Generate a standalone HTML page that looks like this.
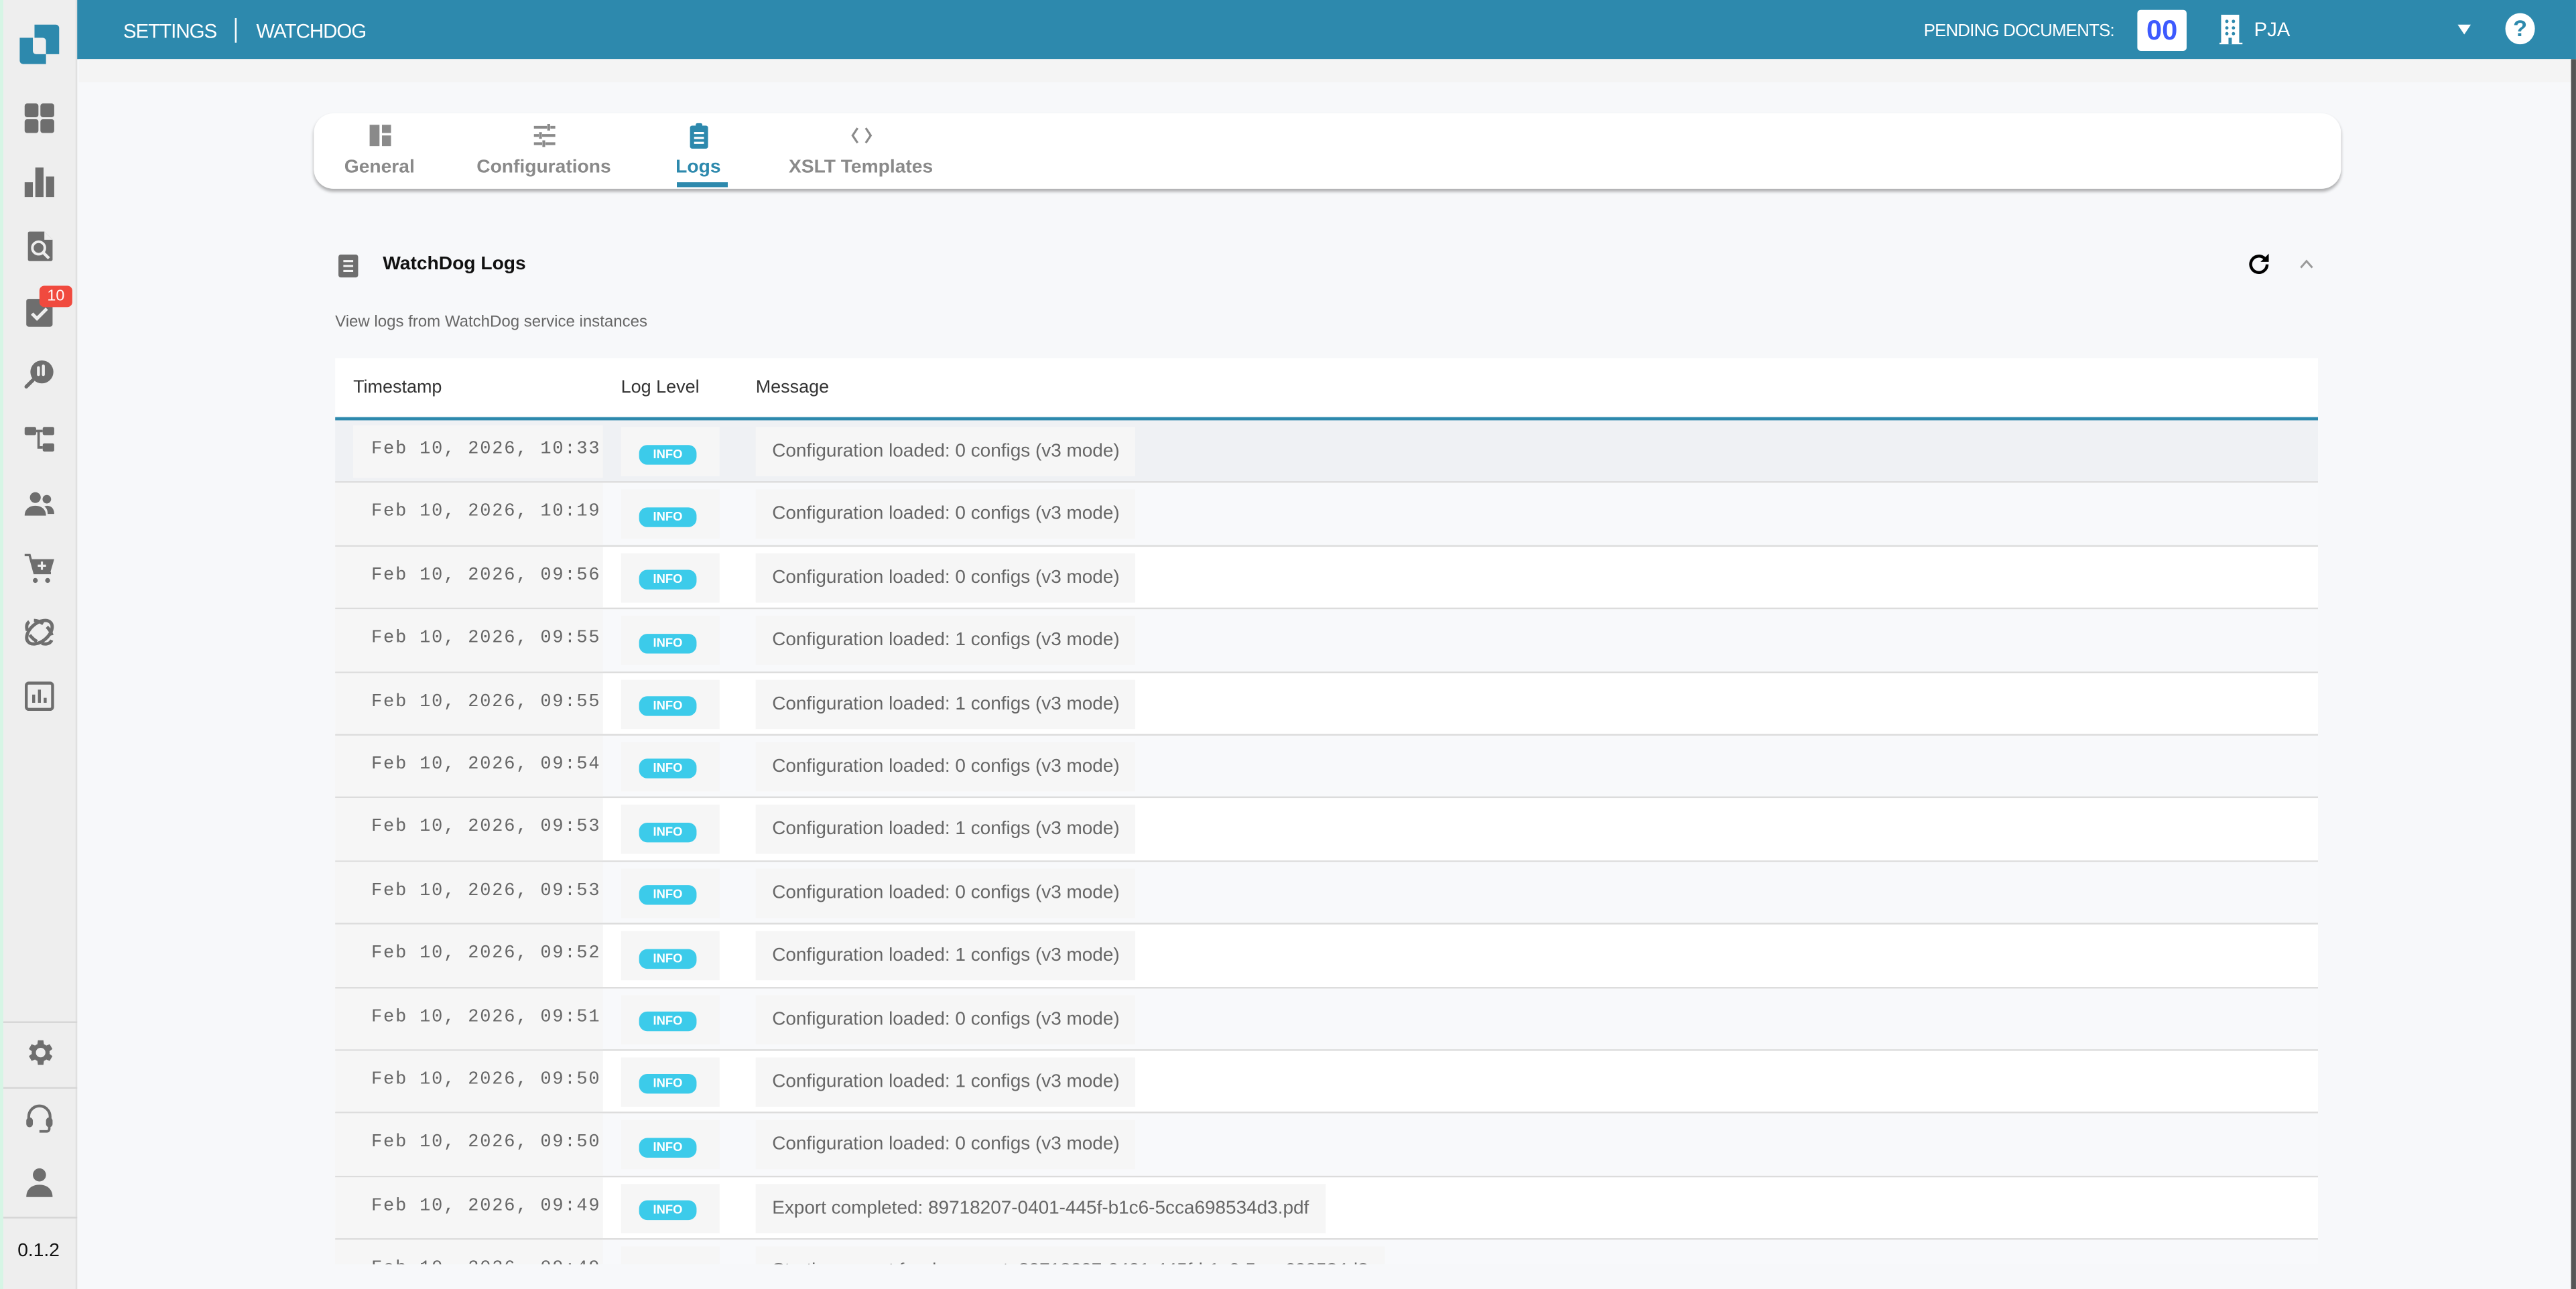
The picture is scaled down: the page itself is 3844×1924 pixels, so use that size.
<!DOCTYPE html>
<html><head><meta charset="utf-8">
<style>
*{box-sizing:border-box;margin:0;padding:0}
html,body{width:3844px;height:1924px;overflow:hidden;background:#f7f8fa}
#s{position:absolute;left:0;top:0;width:1568px;height:785px;transform:scale(2.4515,2.451);transform-origin:0 0;font-family:"Liberation Sans",sans-serif;background:#f7f8fa;overflow:hidden}
.abs{position:absolute}
.side{left:0;top:0;width:47px;height:785px;background:#eeeeee;border-right:1px solid #e0e0e0}
.green{left:0;top:0;width:1.6px;height:785px;background:#d6f5e5;z-index:3}
.ic{position:absolute;left:14px;width:20px;height:20px}
.hdr{left:47px;top:0;width:1521px;height:36px;background:#2d89ad;color:#fff}
.sep{position:absolute;left:0;width:47px;height:1.2px;background:#d6d6d6}
.tabs{left:191px;top:69px;width:1234px;height:46px;background:#fff;border-radius:12px;box-shadow:0 1.5px 2px rgba(0,0,0,.3)}
.tab{position:absolute;top:0;height:46px;text-align:center;font-size:11.5px;font-weight:bold;color:#8a8a8a}
.tab svg{display:block;margin:5px auto 0;width:17px;height:17px}
.tab span{display:block;margin-top:5px}
.tbl{left:204px;top:218px;width:1207px;height:552px;overflow:hidden}
.th{height:38px;background:#fff;border-bottom:2px solid #2d89ad;position:relative;font-size:11px;color:#333}
.th span{position:absolute;top:12px}
.row{position:relative;height:38.4px;border-bottom:1.5px solid #dcdcdc}
.ts{position:absolute;left:0;top:0;width:163px;height:100%;background:#f6f6f6;font-family:"Liberation Mono",monospace;font-size:11px;color:#666;padding-left:22px;line-height:37px;letter-spacing:.75px;white-space:nowrap}
.lv{position:absolute;left:174px;top:4px;width:60px;height:30px;background:#f6f6f6}
.badge{position:absolute;left:11px;top:10.5px;width:35px;height:12px;border-radius:5px;background:#3ccbea;color:#fff;font-size:7.5px;font-weight:bold;text-align:center;line-height:12px}
.msg{position:absolute;left:256px;top:4px;height:30px;background:#f6f6f6;font-size:11.4px;color:#666;padding:0 10px;line-height:30px;white-space:nowrap}
</style></head><body>
<div id="s">
<div class="abs green"></div>
<div class="abs side">
 <svg class="ic" style="top:14px;left:11px;width:26px;height:26px" viewBox="0 0 26 26"><path fill="#2d89ad" d="M10 1h13a2 2 0 0 1 2 2v16h-8v-8a2 2 0 0 0-2-2h-5z"/><path fill="#2d89ad" d="M1 9h8v8a2 2 0 0 0 2 2h6v6H3a2 2 0 0 1-2-2z"/></svg>
 <svg class="ic" style="top:62px" viewBox="0 0 20 20" fill="#6e6e6e"><rect x="1" y="1" width="8.4" height="8.4" rx="1.5"/><rect x="10.6" y="1" width="8.4" height="8.4" rx="1.5"/><rect x="1" y="10.6" width="8.4" height="8.4" rx="1.5"/><rect x="10.6" y="10.6" width="8.4" height="8.4" rx="1.5"/></svg>
 <svg class="ic" style="top:101px" viewBox="0 0 20 20" fill="#6e6e6e"><rect x="1" y="10" width="5" height="9"/><rect x="7.5" y="1" width="5" height="18"/><rect x="14" y="6.5" width="5" height="12.5"/></svg>
 <svg class="ic" style="top:140px" viewBox="0 0 20 20"><path fill="#6e6e6e" d="M4 1h9l5 5v12a1 1 0 0 1-1 1H4a1 1 0 0 1-1-1V2a1 1 0 0 1 1-1z"/><path fill="#eee" d="M13 1v5h5z"/><circle cx="9.5" cy="11" r="3.8" fill="none" stroke="#eee" stroke-width="1.6"/><path d="M12.3 13.8l3.5 3.5" stroke="#eee" stroke-width="1.8"/></svg>
 <svg class="ic" style="top:180px" viewBox="0 0 20 20"><rect x="2" y="2" width="16" height="17" rx="1.5" fill="#6e6e6e"/><path d="M5.5 11l3 3 6-6" stroke="#eee" stroke-width="2" fill="none"/></svg>
 <div class="abs" style="left:24px;top:174px;width:20px;height:13px;background:#f04a3e;border-radius:3px;color:#fff;font-size:9.5px;text-align:center;line-height:13px">10</div>
 <svg class="ic" style="top:218px" viewBox="0 0 20 20"><circle cx="11.5" cy="8.5" r="7" fill="#6e6e6e"/><rect x="8.5" y="5" width="1.8" height="6" rx=".9" fill="#eee"/><rect x="11.5" y="4" width="1.8" height="7" rx=".9" fill="#eee"/><path d="M6 13.5L2 17.5" stroke="#6e6e6e" stroke-width="2.2" stroke-linecap="round"/></svg>
 <svg class="ic" style="top:258px" viewBox="0 0 20 20" fill="#6e6e6e"><rect x="1" y="2" width="7" height="5" rx="1"/><rect x="12" y="2" width="7" height="5" rx="1"/><rect x="12" y="12" width="7" height="5" rx="1"/><path d="M8 4.5h4M9.5 4.5v10h2.5" stroke="#6e6e6e" stroke-width="1.5" fill="none"/></svg>
 <svg class="ic" style="top:297px" viewBox="0 0 20 20" fill="#6e6e6e"><circle cx="7.5" cy="6" r="3.3"/><path d="M1 17c0-4 3-6 6.5-6s6.5 2 6.5 6z"/><circle cx="14.5" cy="7" r="2.6"/><path d="M14.5 11c3 0 4.5 2 4.5 5h-4c0-2-.5-3.5-2-4.6z"/></svg>
 <svg class="ic" style="top:336px" viewBox="0 0 20 20" fill="#6e6e6e"><path d="M4 4.5h15l-2.5 8.5H6.5z"/><path d="M1 2h3l3 11h10" stroke="#6e6e6e" stroke-width="1.4" fill="none"/><circle cx="7.5" cy="17.5" r="1.5"/><circle cx="15" cy="17.5" r="1.5"/><path d="M11.5 6v5M9 8.5h5" stroke="#eee" stroke-width="1.3"/></svg>
 <svg class="ic" style="top:375px" viewBox="0 0 20 20" fill="none" stroke="#6e6e6e" stroke-width="2"><ellipse cx="10" cy="10" rx="9" ry="5.5" transform="rotate(-40 10 10)"/><ellipse cx="10" cy="10" rx="9" ry="5.5" transform="rotate(40 10 10)" stroke-dasharray="6 3"/></svg>
 <svg class="ic" style="top:414px" viewBox="0 0 20 20"><rect x="2" y="2" width="16" height="16" rx="1.5" fill="none" stroke="#6e6e6e" stroke-width="1.8"/><path d="M6.5 14V9M10 14V6M13.5 14v-3" stroke="#6e6e6e" stroke-width="1.8"/></svg>
 <div class="sep" style="top:622px"></div>
 <svg class="ic" style="top:631px" viewBox="0 0 24 24"><path fill="#6e6e6e" d="M19.4 13a7.5 7.5 0 0 0 0-2l2.1-1.6-2-3.5-2.5 1a7 7 0 0 0-1.7-1L14.9 3h-4l-.4 2.9a7 7 0 0 0-1.7 1l-2.5-1-2 3.5L6.4 11a7.5 7.5 0 0 0 0 2l-2.1 1.6 2 3.5 2.5-1a7 7 0 0 0 1.7 1l.4 2.9h4l.4-2.9a7 7 0 0 0 1.7-1l2.5 1 2-3.5zM12.9 15.5a3.5 3.5 0 1 1 0-7 3.5 3.5 0 0 1 0 7z"/></svg>
 <div class="sep" style="top:662px"></div>
 <svg class="ic" style="top:671px" viewBox="0 0 20 20"><path d="M3.5 11V9a6.5 6.5 0 0 1 13 0v2" fill="none" stroke="#6e6e6e" stroke-width="1.7"/><rect x="2" y="9.5" width="4" height="6" rx="2" fill="#6e6e6e"/><rect x="14" y="9.5" width="4" height="6" rx="2" fill="#6e6e6e"/><path d="M16 15v1.5a1.5 1.5 0 0 1-1.5 1.5H10" fill="none" stroke="#6e6e6e" stroke-width="1.5"/></svg>
 <svg class="ic" style="top:710px" viewBox="0 0 20 20" fill="#6e6e6e"><circle cx="10" cy="5.5" r="4"/><path d="M2 19c0-5 3.5-7.5 8-7.5s8 2.5 8 7.5z"/></svg>
 <div class="sep" style="top:741px"></div>
 <div class="abs" style="left:0;width:47px;top:756px;text-align:center;font-size:11.5px;color:#111">0.1.2</div>
</div>
<div class="abs hdr">
 <div class="abs" style="left:28px;top:12px;font-size:12px;letter-spacing:-.4px">SETTINGS</div>
 <div class="abs" style="left:96px;top:11px;width:1px;height:15px;background:#fff"></div>
 <div class="abs" style="left:109px;top:12px;font-size:12px;letter-spacing:-.4px">WATCHDOG</div>
 <div class="abs" style="left:1124px;top:13px;font-size:10.5px;letter-spacing:-.3px">PENDING DOCUMENTS:</div>
 <div class="abs" style="left:1254px;top:6px;width:30px;height:25px;background:#fff;border-radius:2px;color:#3d5afe;font-weight:bold;font-size:17px;text-align:center;line-height:25px">00</div>
 <svg class="abs" style="left:1303px;top:8px;width:16px;height:20px" viewBox="0 0 16 20"><path fill="#fff" d="M2 1h11v17h2v1H1v-1h1z"/><g fill="#2d89ad"><circle cx="5.5" cy="5" r="1"/><circle cx="9.5" cy="5" r="1"/><circle cx="5.5" cy="9" r="1"/><circle cx="9.5" cy="9" r="1"/><circle cx="5.5" cy="12.5" r="1"/><circle cx="9.5" cy="12.5" r="1"/><rect x="6.5" y="15" width="2" height="4"/></g></svg>
 <div class="abs" style="left:1325px;top:11px;font-size:12px">PJA</div>
 <div class="abs" style="left:1449px;top:15px;width:0;height:0;border-left:4px solid transparent;border-right:4px solid transparent;border-top:6px solid #fff"></div>
 <div class="abs" style="left:1478px;top:8px;width:18px;height:19px;border-radius:50%;background:#fff;color:#2d89ad;font-weight:bold;font-size:14px;text-align:center;line-height:19px">?</div>
</div>
<div class="abs" style="left:48px;top:36px;width:1520px;height:14px;background:#f4f4f4"></div>
<div class="abs" style="left:1565px;top:36px;width:3px;height:749px;background:#555"></div>
<div class="abs tabs">
 <div class="tab" style="left:10px;width:60px"><svg viewBox="0 0 17 17" fill="#8a8a8a"><rect x="2" y="2" width="6" height="13"/><rect x="9.5" y="2" width="5.5" height="5"/><rect x="9.5" y="8.5" width="5.5" height="6.5"/></svg><span>General</span></div>
 <div class="tab" style="left:95px;width:90px"><svg viewBox="0 0 17 17" stroke="#8a8a8a" stroke-width="1.7" fill="none"><path d="M2 3.5h8M12 3.5h3M11 1.5v4M2 8.5h3M7 8.5h8M6 6.5v4M2 13.5h5M9 13.5h6M8 11.5v4"/></svg><span>Configurations</span></div>
 <div class="tab" style="left:215px;width:38px;color:#2d89ad"><svg viewBox="0 0 17 17"><rect x="3" y="2.5" width="11" height="14" rx="1.3" fill="#2d89ad"/><rect x="6.5" y="1" width="4" height="3" rx="1" fill="#2d89ad"/><path d="M5.5 7h6M5.5 10h6M5.5 13h6" stroke="#fff" stroke-width="1.3"/></svg><span>Logs</span><div class="abs" style="left:6px;top:42px;width:31px;height:3px;background:#2d89ad"></div></div>
 <div class="tab" style="left:285px;width:96px"><svg viewBox="0 0 17 17" stroke="#8a8a8a" stroke-width="1.3" fill="none"><path d="M6 4L3 8.5 6 13M11 4l3 4.5-3 4.5"/></svg><span>XSLT Templates</span></div>
</div>
<svg class="abs" style="left:206px;top:155px;width:13px;height:14px" viewBox="0 0 13 14"><rect x="0" y="0" width="12" height="14" rx="1.5" fill="#6e6e6e"/><path d="M3 4h6M3 7h6M3 10h6" stroke="#f4f4f4" stroke-width="1.3"/></svg>
<div class="abs" style="left:233px;top:155px;font-size:11.5px;font-weight:bold;color:#111">WatchDog Logs</div>
<svg class="abs" style="left:1367px;top:153px;width:16px;height:16px" viewBox="0 0 16 16"><path d="M13 8a5 5 0 1 1-1.5-3.6" stroke="#000" stroke-width="1.8" fill="none"/><path d="M14 1.5v5h-5z" fill="#000"/></svg>
<svg class="abs" style="left:1399px;top:157px;width:10px;height:8px" viewBox="0 0 10 8"><path d="M1.5 6L5 2l3.5 4" stroke="#999" stroke-width="1.2" fill="none"/></svg>
<div class="abs" style="left:204px;top:191px;font-size:9.8px;color:#666">View logs from WatchDog service instances</div>
<div class="abs tbl">
 <div class="th"><span style="left:11px">Timestamp</span><span style="left:174px">Log Level</span><span style="left:256px">Message</span></div>
 <div class="row" style="background:#eff1f4"><div class="ts" style="left:11px;width:152px;top:3px;height:32px;line-height:31px;padding-left:11px">Feb 10, 2026, 10:33</div><div class="lv"><div class="badge">INFO</div></div><div class="msg">Configuration loaded: 0 configs (v3 mode)</div></div>
 <div class="row" style="background:#f8f9fb"><div class="ts">Feb 10, 2026, 10:19</div><div class="lv"><div class="badge">INFO</div></div><div class="msg">Configuration loaded: 0 configs (v3 mode)</div></div>
 <div class="row" style="background:#fff"><div class="ts">Feb 10, 2026, 09:56</div><div class="lv"><div class="badge">INFO</div></div><div class="msg">Configuration loaded: 0 configs (v3 mode)</div></div>
 <div class="row" style="background:#f8f9fb"><div class="ts">Feb 10, 2026, 09:55</div><div class="lv"><div class="badge">INFO</div></div><div class="msg">Configuration loaded: 1 configs (v3 mode)</div></div>
 <div class="row" style="background:#fff"><div class="ts">Feb 10, 2026, 09:55</div><div class="lv"><div class="badge">INFO</div></div><div class="msg">Configuration loaded: 1 configs (v3 mode)</div></div>
 <div class="row" style="background:#f8f9fb"><div class="ts">Feb 10, 2026, 09:54</div><div class="lv"><div class="badge">INFO</div></div><div class="msg">Configuration loaded: 0 configs (v3 mode)</div></div>
 <div class="row" style="background:#fff"><div class="ts">Feb 10, 2026, 09:53</div><div class="lv"><div class="badge">INFO</div></div><div class="msg">Configuration loaded: 1 configs (v3 mode)</div></div>
 <div class="row" style="background:#f8f9fb"><div class="ts">Feb 10, 2026, 09:53</div><div class="lv"><div class="badge">INFO</div></div><div class="msg">Configuration loaded: 0 configs (v3 mode)</div></div>
 <div class="row" style="background:#fff"><div class="ts">Feb 10, 2026, 09:52</div><div class="lv"><div class="badge">INFO</div></div><div class="msg">Configuration loaded: 1 configs (v3 mode)</div></div>
 <div class="row" style="background:#f8f9fb"><div class="ts">Feb 10, 2026, 09:51</div><div class="lv"><div class="badge">INFO</div></div><div class="msg">Configuration loaded: 0 configs (v3 mode)</div></div>
 <div class="row" style="background:#fff"><div class="ts">Feb 10, 2026, 09:50</div><div class="lv"><div class="badge">INFO</div></div><div class="msg">Configuration loaded: 1 configs (v3 mode)</div></div>
 <div class="row" style="background:#f8f9fb"><div class="ts">Feb 10, 2026, 09:50</div><div class="lv"><div class="badge">INFO</div></div><div class="msg">Configuration loaded: 0 configs (v3 mode)</div></div>
 <div class="row" style="background:#fff"><div class="ts">Feb 10, 2026, 09:49</div><div class="lv"><div class="badge">INFO</div></div><div class="msg">Export completed: 89718207-0401-445f-b1c6-5cca698534d3.pdf</div></div>
 <div class="row" style="background:#f8f9fb"><div class="ts">Feb 10, 2026, 09:49</div><div class="lv"><div class="badge">INFO</div></div><div class="msg">Starting export for document: 89718207-0401-445f-b1c6-5cca698534d3</div></div>
</div>
</div>
</body></html>
